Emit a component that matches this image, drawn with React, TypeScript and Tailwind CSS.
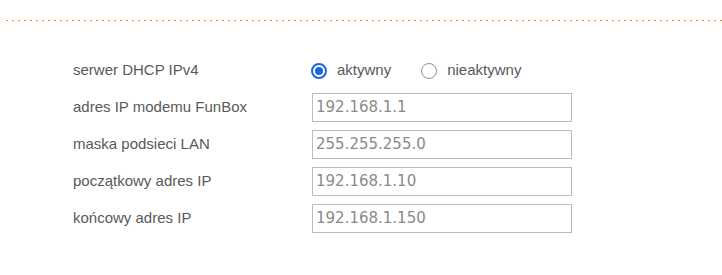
const rows = [
  { label: "adres IP modemu FunBox", value: "192.168.1.1" },
  { label: "maska podsieci LAN", value: "255.255.255.0" },
  { label: "początkowy adres IP", value: "192.168.1.10" },
  { label: "końcowy adres IP", value: "192.168.1.150" },
];

function Radio({ checked, label }: { checked: boolean; label: string }) {
  return (
    <label className="flex items-center gap-[10px]">
      {checked ? (
        <span className="flex h-[16px] w-[16px] items-center justify-center rounded-full border-2 border-[#1769e0] bg-white">
          <span className="h-[8px] w-[8px] rounded-full bg-[#1769e0]" />
        </span>
      ) : (
        <span className="h-[16px] w-[16px] rounded-full border border-[#8f8f9d] bg-white" />
      )}
      <span>{label}</span>
    </label>
  );
}

export default function App() {
  return (
    <div className="h-[275px] w-[722px] overflow-hidden bg-white font-['Liberation_Sans',Arial,sans-serif] text-[15px] text-[#595959]">
      <div className="ml-[6px] mt-[20px] h-px bg-[repeating-linear-gradient(to_right,#ff7f1a_0_2px,transparent_2px_6px)]" />

      <div className="mt-[35px] flex flex-col gap-[8px] pl-[73px]">
        <div className="flex h-[29px] items-center">
          <div className="w-[238px]">serwer DHCP IPv4</div>
          <div className="flex items-center gap-[30px]">
            <Radio checked label="aktywny" />
            <Radio checked={false} label="nieaktywny" />
          </div>
        </div>

        {rows.map((row) => (
          <div key={row.label} className="flex h-[29px] items-center">
            <div className="w-[239px]">{row.label}</div>
            <div className="flex h-[29px] w-[260px] items-center border border-[#bcbcbc] pl-[3px] font-['DejaVu_Sans',Verdana,sans-serif] text-[15px] text-[#8a8a8a]">
              {row.value}
            </div>
          </div>
        ))}
      </div>
    </div>
  );
}
